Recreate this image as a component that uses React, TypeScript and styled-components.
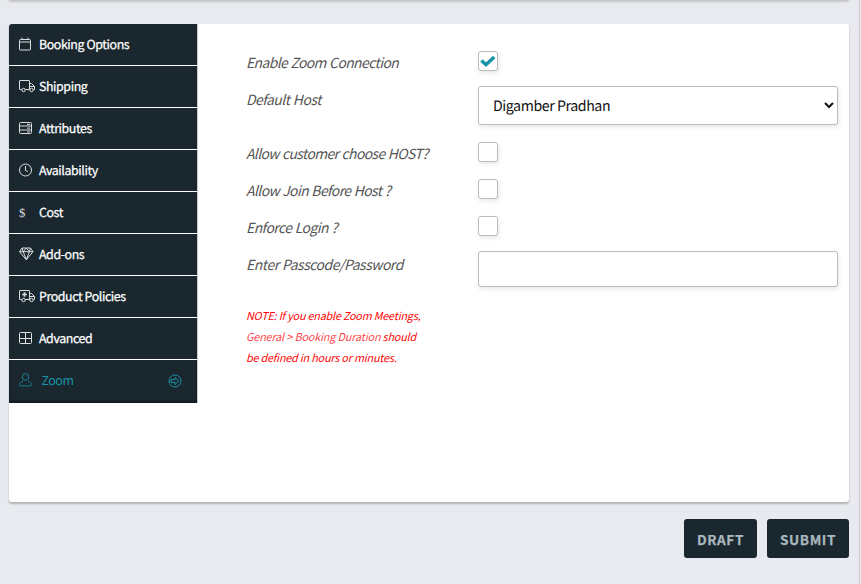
import React, { useState } from "react";
import styled, { createGlobalStyle, css } from "styled-components";

const GlobalStyle = createGlobalStyle`
  * { box-sizing: border-box; }
  body { margin: 0; background: #e9eaef; }
`;

const Page = styled.div`
  height: 584px;
  padding-left: 9px;
  padding-right: 10px;
  border-right: 1px solid #c9cacc;
  margin-right: 1px;
  overflow: hidden;
  background: #e9eaef;
  font-family: "Noto Sans CJK SC", "Noto Sans", sans-serif;
  font-kerning: normal;
  text-rendering: geometricPrecision;
`;

const PreviousCard = styled.div`
  height: 4px;
  margin-top: -4px;
  border-radius: 0 0 3px 3px;
  background: #fff;
  box-shadow: 0 1px 2px 1px #c3c4c4;
`;

const Card = styled.section`
  display: flex;
  align-items: flex-start;
  height: 478px;
  margin-top: 24px;
  border-radius: 3px;
  background: #fff;
  box-shadow: 0 2px 2px rgba(0, 0, 0, 0.24);
`;

const Sidebar = styled.nav`
  width: 189px;
  flex: none;
  border-right: 1px solid #ccc;
  border-radius: 3px 0 0 0;
  overflow: hidden;
  background: #1a272e;
`;

const NavItem = styled.a<{ $active?: boolean }>`
  display: flex;
  align-items: center;
  height: ${(p) => (p.$active ? 43 : 42)}px;
  padding: 0 15px ${(p) => (p.$active ? 3 : 1)}px 9px;
  border-bottom: ${(p) => (p.$active ? "0" : "1px solid #fff")};
  box-shadow: ${(p) => (p.$active ? "inset 0 -2px 3px #111c22" : "none")};
  color: ${(p) => (p.$active ? "#1794a8" : "#fff")};
`;

const NavIcon = styled.svg`
  width: 18px;
  height: 16px;
  flex: none;
  margin-right: 3px;
  fill: none;
  stroke: currentColor;
  stroke-width: 1;
  opacity: 0.85;
`;

const NavText = styled.span<{ $active?: boolean }>`
  flex: 1;
  font-size: 12.4px;
  line-height: 20px;
  letter-spacing: -0.41px;
  white-space: nowrap;
  ${(p) => (p.$active ? css`padding-left: 2.5px;` : css`-webkit-text-stroke: 0.25px currentColor;`)}
`;

const ActiveMark = styled.svg`
  width: 14px;
  height: 14px;
  margin-top: 2px;
  fill: none;
  stroke: #1794a8;
  stroke-width: 1;
`;

const Form = styled.form`
  display: grid;
  grid-template-columns: 232px 360px;
  grid-template-rows: 35px 56px 37px 37px 35px 47px auto;
  align-items: start;
  padding: 27px 0 0 48px;
`;

const Label = styled.label<{ $low?: boolean; $tracking?: number }>`
  margin-top: ${(p) => (p.$low ? 2 : 0)}px;
  color: #555;
  font-size: 13.9px;
  font-style: italic;
  line-height: 24px;
  letter-spacing: ${(p) => p.$tracking ?? -0.48}px;
  word-spacing: 0.7px;
  white-space: nowrap;
`;

const CheckBox = styled.button`
  display: flex;
  align-items: center;
  justify-content: center;
  width: 20px;
  height: 20px;
  padding: 0;
  border: 1px solid #bdbdbd;
  border-radius: 3px;
  background: #fff;
  box-shadow: 1px 2px 4px rgba(0, 0, 0, 0.1);
`;

const field = css`
  width: 360px;
  border: 1px solid #bdbdbd;
  border-radius: 3px;
  background: #fff;
  box-shadow: 1px 2px 4px rgba(0, 0, 0, 0.1);
  font-family: inherit;
  color: #111;
`;

const SelectBox = styled.div`
  ${field}
  display: flex;
  align-items: center;
  justify-content: space-between;
  height: 39px;
  padding: 1px 3px 0 14px;
  font-size: 14.2px;
  line-height: 24px;
  letter-spacing: -0.43px;
`;

const SelectArrow = styled.svg`
  width: 10px;
  height: 8px;
  margin-bottom: 2px;
  fill: none;
  stroke: #111;
  stroke-width: 2;
`;

const PasswordInput = styled.input`
  ${field}
  height: 36px;
  padding: 0 14px;
  font-size: 14px;
`;

const Note = styled.p`
  grid-column: 1;
  margin: 8px 0 0;
  color: #f00;
  font-size: 10.8px;
  font-style: italic;
  line-height: 21px;
  letter-spacing: -0.19px;
  white-space: nowrap;
`;

const NotePath = styled.span`
  opacity: 0.75;
  letter-spacing: -0.14px;
`;

const Actions = styled.footer`
  display: flex;
  justify-content: flex-end;
  gap: 10px;
  margin-top: 17px;
`;

const ActionButton = styled.button<{ $width: number }>`
  width: ${(p) => p.$width}px;
  height: 39px;
  padding: 0;
  border: 0;
  border-radius: 3px;
  background: #1a272e;
  color: #a9b7be;
  font: 700 13.6px/24px "Noto Sans CJK SC", "Noto Sans", sans-serif;
  letter-spacing: 0.6px;
  -webkit-text-stroke: 0.25px currentColor;
`;

const Truck = ({ medical }: { medical?: boolean }) => (
  <>
    <path d="M3.5 11.5h-1.5q-.5 0-.5-.5V3q0-.5.5-.5h9q.5 0 .5.5v8.5H7.5M11.5 5.5h2l3 3v3h-1M11.5 8.5h5" />
    <circle cx="5.5" cy="12" r="1.7" />
    <circle cx="13.5" cy="12" r="1.7" />
    {medical && <path d="M6.5 4.2v4.6M4.2 6.5h4.6" strokeWidth="1.7" />}
  </>
);

const items: { label: string; icon: React.ReactNode }[] = [
  {
    label: "Booking Options",
    icon: <><rect x="1.5" y="3.5" width="11" height="10.5" rx="1" /><path d="M1.5 6h11M4 1.5v2M10 1.5v2" /></>,
  },
  { label: "Shipping", icon: <Truck /> },
  {
    label: "Attributes",
    icon: <><rect x="1.5" y="2.5" width="12" height="11" rx="1" /><path d="M1.5 6h12M1.5 10h12M9 4.4h3M9 8.1h3M9 11.9h3" /></>,
  },
  { label: "Availability", icon: <><circle cx="7.5" cy="8" r="6" /><path d="M7.5 4v4.5l2.2 1" /></> },
  {
    label: "Cost",
    icon: (
      <text x="1" y="12.5" fontFamily="Liberation Serif, serif" fontSize="12.5" fill="currentColor" stroke="none">
        $
      </text>
    ),
  },
  {
    label: "Add-ons",
    icon: <path d="M4 2h8.5L15 5.7 8.3 13.7 1.5 5.7ZM1.5 5.7H15M8.3 2 5.2 5.7l3.1 8 3.1-8ZM4 2l1.2 3.7M12.5 2l-1.1 3.7" />,
  },
  { label: "Product Policies", icon: <Truck medical /> },
  {
    label: "Advanced",
    icon: <><rect x="1.5" y="2.5" width="12" height="11" rx="1" /><path d="M7.5 2.5v11M1.5 8.5h12" /></>,
  },
  {
    label: "Zoom",
    icon: (
      <>
        <ellipse cx="7.5" cy="5" rx="3.2" ry="3.4" />
        <path d="M5 9.5c-2.3.4-3.5 1.4-3.5 3.2q0 1.2 1 1.2h10q1 0 1-1.2c0-1.8-1.2-2.8-3.5-3.2" />
      </>
    ),
  },
];

const Toggle = ({ initial = false }: { initial?: boolean }) => {
  const [on, setOn] = useState(initial);
  return (
    <CheckBox type="button" role="checkbox" aria-checked={on} onClick={() => setOn(!on)}>
      {on && (
        <svg width="16" height="14" viewBox="0 0 16 14" fill="none" stroke="#1794a8" strokeWidth="3.4">
          <path d="M1.4 6.6 6 10.8l8.2-7.8" />
        </svg>
      )}
    </CheckBox>
  );
};

export default function App() {
  return (
    <>
      <GlobalStyle />
      <Page>
        <PreviousCard />
        <Card>
          <Sidebar>
            {items.map(({ label, icon }) => {
              const active = label === "Zoom";
              return (
                <NavItem key={label} $active={active}>
                  <NavIcon viewBox="0 0 18 16">{icon}</NavIcon>
                  <NavText $active={active}>{label}</NavText>
                  {active && (
                    <ActiveMark viewBox="0 0 14 14">
                      <circle cx="7" cy="7" r="6" />
                      <path d="M3 5.6h4V3.4L10.8 7 7 10.6V8.4H3Z" />
                    </ActiveMark>
                  )}
                </NavItem>
              );
            })}
          </Sidebar>
          <Form>
            <Label $tracking={-0.58}>Enable Zoom Connection</Label>
            <Toggle initial />
            <Label $low>Default Host</Label>
            <SelectBox>
              Digamber Pradhan
              <SelectArrow viewBox="0 0 10 8">
                <path d="M1 2l4 4 4-4" />
              </SelectArrow>
            </SelectBox>
            <Label $tracking={-0.6}>Allow customer choose HOST?</Label>
            <Toggle />
            <Label $tracking={-0.57}>Allow Join Before Host ?</Label>
            <Toggle />
            <Label $tracking={-0.52}>Enforce Login ?</Label>
            <Toggle />
            <Label $low $tracking={-0.43}>Enter Passcode/Password</Label>
            <PasswordInput />
            <Note>
              NOTE: If you enable Zoom Meetings,
              <br />
              <NotePath>General &gt; Booking Duration</NotePath> should
              <br />
              be defined in hours or minutes.
            </Note>
          </Form>
        </Card>
        <Actions>
          <ActionButton $width={73}>DRAFT</ActionButton>
          <ActionButton $width={82}>SUBMIT</ActionButton>
        </Actions>
      </Page>
    </>
  );
}
